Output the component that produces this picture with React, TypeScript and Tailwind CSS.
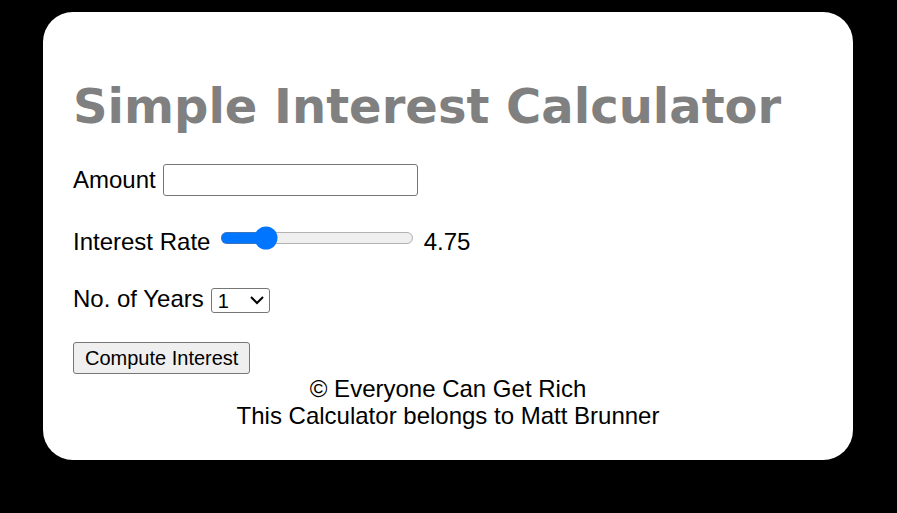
import { useState } from "react";

export default function App() {
  const [amount, setAmount] = useState("");
  const [rate, setRate] = useState(4.75);
  const [years, setYears] = useState("1");

  return (
    <div className="min-h-screen bg-black pt-[12px] font-['Liberation_Sans',Arial,sans-serif] text-[24px] text-black">
      <div className="ml-[43px] w-[810px] rounded-[30px] bg-white px-[30px] pb-[30px] pt-[30px]">
        <h1 className="mt-[36px] font-['DejaVu_Sans',Verdana,sans-serif] text-[48px] font-bold leading-[56px] text-[#808080]">
          Simple Interest Calculator
        </h1>

        {/* Amount */}
        <div className="mt-[30px] flex h-[32px] items-center gap-[7px]">
          <label htmlFor="amount" className="leading-[28px]">Amount</label>
          <input
            id="amount"
            type="number"
            value={amount}
            onChange={(e) => setAmount(e.target.value)}
            className="h-[32px] w-[255px] rounded-[3px] border border-[#767676] bg-white px-[2px] outline-none"
          />
        </div>

        {/* Interest rate (native controls are zoomed 1.5x to match the reference) */}
        <div className="mt-[32px] flex h-[28px] items-center">
          <label htmlFor="rate" className="leading-[28px]">Interest Rate</label>
          <input
            id="rate"
            type="range"
            min={1}
            max={20}
            step={0.25}
            value={rate}
            onChange={(e) => setRate(parseFloat(e.target.value))}
            className="mb-[5px] ml-[6.5px] w-[129px] [zoom:1.5]"
          />
          <span className="ml-[10px] leading-[28px]">{rate.toFixed(2)}</span>
        </div>

        {/* Years */}
        <div className="mt-[29px] flex h-[28px] items-center gap-[7px]">
          <label htmlFor="years" className="leading-[28px]">No. of Years</label>
          <select
            id="years"
            value={years}
            onChange={(e) => setYears(e.target.value)}
            className="mt-[2px] h-[16.5px] w-[39.5px] rounded-[2px] border border-[#767676] bg-white text-[13.33px] [zoom:1.5]"
          >
            {Array.from({ length: 10 }, (_, i) => (
              <option key={i + 1} value={String(i + 1)}>{i + 1}</option>
            ))}
          </select>
        </div>

        <button className="mt-[29px] h-[32px] rounded-[3px] border border-[#767676] bg-[#efefef] px-[11px] text-[20px] leading-[23px]">
          Compute Interest
        </button>

        <div className="text-center leading-[27.6px]">
          <p>© Everyone Can Get Rich</p>
          <p>This Calculator belongs to Matt Brunner</p>
        </div>
      </div>
    </div>
  );
}
